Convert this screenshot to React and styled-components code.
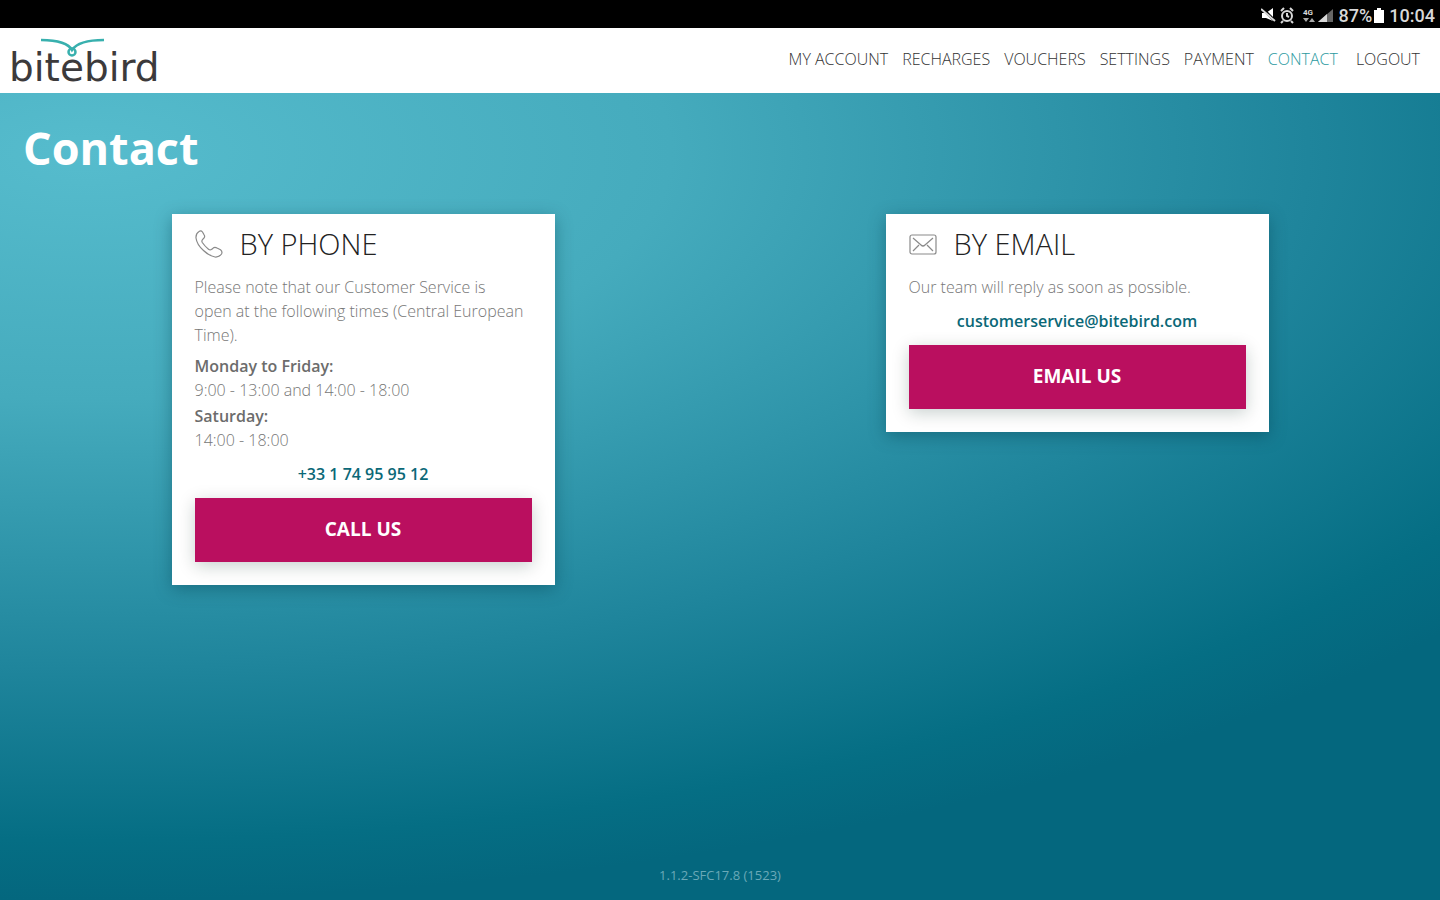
import React from 'react';
import styled, { createGlobalStyle } from 'styled-components';

const GlobalStyle = createGlobalStyle`
  * {
    box-sizing: border-box;
  }

  body {
    margin: 0;
    font-family: 'Open Sans', sans-serif;
  }
`;

const Page = styled.div`
  display: flex;
  flex-direction: column;
  min-height: 100vh;
  background: radial-gradient(ellipse 123% 83% at 6% 17%, #56bccd 0%, #45abbd 33%, #1f859c 69%, #056e84 92%, #04677e 100%);
`;

const StatusBar = styled.div`
  display: flex;
  align-items: center;
  justify-content: flex-end;
  gap: 5px;
  height: 28px;
  padding: 3px 5px 0 0;
  background: #000;
  color: #d8d8d8;
  font: 500 18px/24px Roboto, sans-serif;
`;

const Level = styled.span`
  display: flex;
  align-items: center;
  gap: 2px;
`;

const Header = styled.header`
  display: flex;
  align-items: center;
  justify-content: space-between;
  height: 65px;
  padding: 0 20px 0 9px;
  background: #fff;
`;

const Brand = styled.a`
  display: flex;
  flex-direction: column;
  align-items: flex-start;
  color: #3c3a3b;
  font: 39px/32px 'DejaVu Sans', sans-serif;
  text-decoration: none;
`;

const Bird = styled.svg`
  margin: 0 0 -5px 31px;
`;

const Nav = styled.nav`
  display: flex;
  gap: 14px;
  padding-bottom: 4px;
`;

const NavLink = styled.a`
  color: ${(props) => (props.$active ? '#2c9a9f' : '#333')};
  font-size: 16px;
  font-weight: 300;
  line-height: 24px;
  text-decoration: none;

  &:last-child {
    margin-left: 4px;
  }
`;

const Main = styled.main`
  flex: 1;
  padding: 0 6px;
`;

const Title = styled.h1`
  margin: 0;
  padding: 23px 17px 34px;
  color: #fff;
  font-size: 45px;
  font-weight: 700;
  line-height: 64px;
`;

const Columns = styled.div`
  display: grid;
  grid-template-columns: 1fr 1fr;
  align-items: start;
  justify-items: center;
`;

const Card = styled.section`
  width: 383px;
  max-width: 100%;
  padding: 12px 23px 23px;
  background: #fff;
  box-shadow: 0 4px 16px rgba(0, 60, 75, 0.4);
`;

const CardTitle = styled.h2`
  display: flex;
  align-items: center;
  gap: 17px;
  margin: 0 0 13px;
  color: #222;
  font-size: 29px;
  font-weight: 300;
  line-height: 36px;
`;

const Text = styled.p`
  margin: 0 0 7px;
  color: #777;
  font-size: 16px;
  font-weight: 300;
  line-height: 24px;
`;

const Hours = styled.dl`
  margin: 0 0 2px;
  color: #777;
  font-size: 16px;
  font-weight: 300;
  line-height: 24px;

  dt {
    color: #6c6c6c;
    font-weight: 600;
  }

  dd {
    margin: 0;
  }
`;

const Detail = styled.a`
  display: block;
  margin: 10px 0 12px;
  color: #0b6877;
  font-size: 16px;
  font-weight: 600;
  line-height: 24px;
  text-align: center;
  text-decoration: none;
`;

const Button = styled.button`
  display: block;
  width: 100%;
  height: 64px;
  padding: 0 0 2px;
  border: 0;
  background: #ba0f5f;
  box-shadow: 0 4px 16px rgba(0, 40, 30, 0.22);
  color: #fff;
  font: 700 19px/24px 'Open Sans', sans-serif;
`;

const Footer = styled.footer`
  padding-bottom: 13px;
  color: #6aa9b8;
  font-size: 13px;
  line-height: 24px;
  text-align: center;
`;

const NetworkLabel = styled.text`
  font: 700 8px Roboto, sans-serif;
`;

const links = ['My account', 'Recharges', 'Vouchers', 'Settings', 'Payment', 'Contact', 'Logout'];

const StatusIcons = () => (
  <svg width="73" height="18" viewBox="0 0 73 18" fill="none" stroke="#d8d8d8" strokeWidth="2">
    <path d="M1 6h4l7-5v13L5 11H1z" fill="#fff" stroke="none" />
    <path d="M1 1l13 13" stroke="#000" strokeWidth="3" />
    <path d="M0 2l14 12" strokeWidth="2" />
    <circle cx="26" cy="9" r="5" />
    <path d="M20 4l3-3M32 4l-3-3M22 14l-2 2M30 14l2 2M26 6v3l2 1" />
    <NetworkLabel x="42" y="8" fill="#d8d8d8" stroke="none">4G</NetworkLabel>
    <path d="M42 11l3 4 3-4zM48 15l3-4 3 4z" fill="#aaa" stroke="none" />
    <path d="M57 15L72 2v13z" fill="#666" stroke="none" />
    <path d="M57 15l9-8v8z" fill="#d8d8d8" stroke="none" />
  </svg>
);

const PhoneIcon = () => (
  <svg width="28" height="28" viewBox="0 0 28 28" fill="none" stroke="#8a8a8a" strokeWidth="1.2" strokeLinejoin="round">
    <path d="M4 1.500C1.500 3 .8 5 1 8c.5 4 3.500 9 7.500 12.500C12 24 16 26 20 27c3 .3 5-1 6.500-3 .8-1.500.5-3-1-4.200L22 18c-1.500-1-3-.8-4 .2l-1.500 1.300c-1 .6-2 .5-3-.3-2.500-2-4.500-4.200-6.200-6.700-.6-1-.5-2 .2-2.800L9 8c.8-1 .8-2 .2-3L7.500 2C6.500.7 5.300.6 4 1.500z" />
  </svg>
);

const MailIcon = () => (
  <svg width="28" height="28" viewBox="0 0 28 28" fill="none" stroke="#8a8a8a" strokeWidth="1.2" strokeLinejoin="round">
    <rect x="1" y="5" width="26" height="19" rx="2" />
    <path d="M4 8l8 7q2 2 4 0l8-7M4 21l6-6M24 21l-6-6" />
  </svg>
);

export default function App() {
  return (
    <Page>
      <GlobalStyle />
      <StatusBar>
        <StatusIcons />
        <Level>
          87%
          <svg width="10" height="15" viewBox="0 0 10 15" fill="#fff">
            <path d="M3 0h4v2h3v13H0V2h3z" />
          </svg>
        </Level>
        <span>10:04</span>
      </StatusBar>
      <Header>
        <Brand href="#home">
          <Bird width="66" height="20" viewBox="0 0 66 20" fill="none" stroke="#38b0ae" strokeWidth="2.500">
            <path d="M1 3C18 3 29 7 32 13C36 7 47 3 64 3" />
            <circle cx="32" cy="15" r="3.500" />
          </Bird>
          bitebird
        </Brand>
        <Nav>
          {links.map((link) => (
            <NavLink key={link} href="#nav" $active={link === 'Contact'}>{link.toUpperCase()}</NavLink>
          ))}
        </Nav>
      </Header>
      <Main>
        <Title>Contact</Title>
        <Columns>
          <Card>
            <CardTitle><PhoneIcon />BY PHONE</CardTitle>
            <Text>
              Please note that our Customer Service is
              <br />
              open at the following times (Central European Time).
            </Text>
            <Hours>
              <dt>Monday to Friday:</dt>
              <dd>9:00 - 13:00 and 14:00 - 18:00</dd>
            </Hours>
            <Hours>
              <dt>Saturday:</dt>
              <dd>14:00 - 18:00</dd>
            </Hours>
            <Detail href="tel:+33174959512">+33 1 74 95 95 12</Detail>
            <Button type="button">CALL US</Button>
          </Card>
          <Card>
            <CardTitle><MailIcon />BY EMAIL</CardTitle>
            <Text>Our team will reply as soon as possible.</Text>
            <Detail href="mailto:customerservice@bitebird.com">customerservice@bitebird.com</Detail>
            <Button type="button">EMAIL US</Button>
          </Card>
        </Columns>
      </Main>
      <Footer>1.1.2-SFC17.8 (1523)</Footer>
    </Page>
  );
}
